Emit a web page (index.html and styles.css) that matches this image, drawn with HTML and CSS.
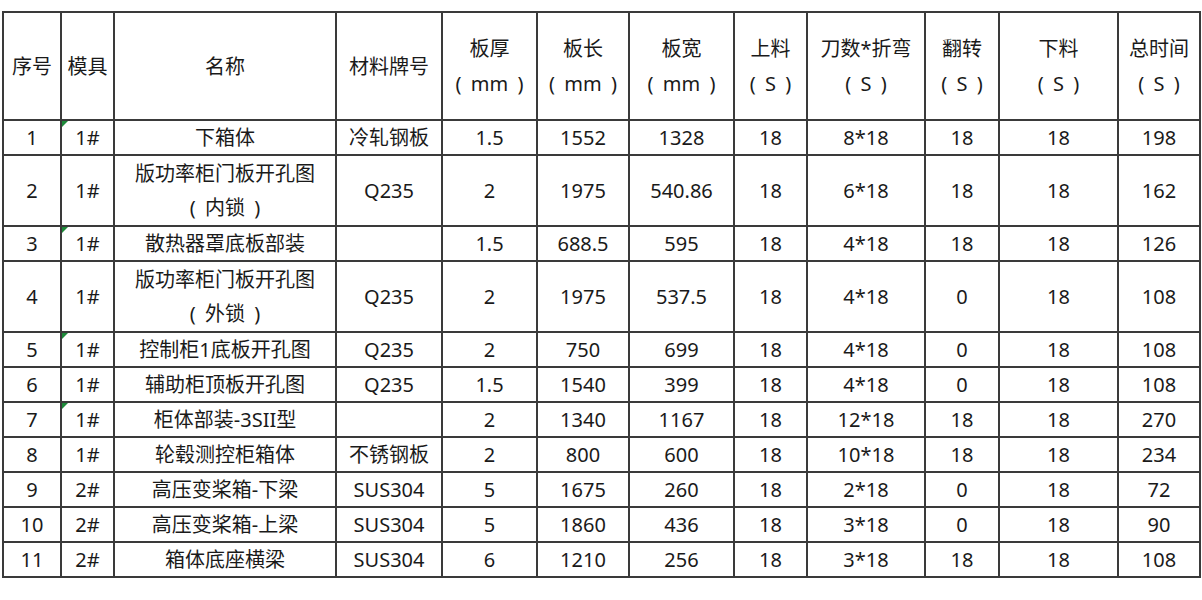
FILE: index.html
```html
<!DOCTYPE html>
<html lang="zh-CN">
<head>
<meta charset="utf-8">
<title>工时表</title>
<link rel="stylesheet" href="styles.css">
</head>
<body>
<table class="sheet">
  <colgroup>
    <col class="c1"><col class="c2"><col class="c3"><col class="c4"><col class="c5"><col class="c6">
    <col class="c7"><col class="c8"><col class="c9"><col class="c10"><col class="c11"><col class="c12">
  </colgroup>
  <thead>
    <tr class="head">
      <th>序号</th><th>模具</th><th>名称</th><th>材料牌号</th>
      <th>板厚<br><span class="unit">( mm )</span></th><th>板长<br><span class="unit">( mm )</span></th><th>板宽<br><span class="unit">( mm )</span></th>
      <th>上料<br><span class="unit">( S )</span></th><th>刀数*折弯<br><span class="unit">( S )</span></th><th>翻转<br><span class="unit">( S )</span></th><th>下料<br><span class="unit">( S )</span></th><th>总时间<br><span class="unit">( S )</span></th>
    </tr>
  </thead>
  <tbody>
    <tr><td>1</td><td class="flag">1#</td><td>下箱体</td><td>冷轧钢板</td><td>1.5</td><td>1552</td><td>1328</td><td>18</td><td>8*18</td><td>18</td><td>18</td><td>198</td></tr>
    <tr class="tall"><td>2</td><td>1#</td><td>版功率柜门板开孔图<br><span class="unit">( 内锁 )</span></td><td>Q235</td><td>2</td><td>1975</td><td>540.86</td><td>18</td><td>6*18</td><td>18</td><td>18</td><td>162</td></tr>
    <tr><td>3</td><td class="flag">1#</td><td>散热器罩底板部装</td><td></td><td>1.5</td><td>688.5</td><td>595</td><td>18</td><td>4*18</td><td>18</td><td>18</td><td>126</td></tr>
    <tr class="tall"><td>4</td><td>1#</td><td>版功率柜门板开孔图<br><span class="unit">( 外锁 )</span></td><td>Q235</td><td>2</td><td>1975</td><td>537.5</td><td>18</td><td>4*18</td><td>0</td><td>18</td><td>108</td></tr>
    <tr><td>5</td><td class="flag">1#</td><td>控制柜1底板开孔图</td><td>Q235</td><td>2</td><td>750</td><td>699</td><td>18</td><td>4*18</td><td>0</td><td>18</td><td>108</td></tr>
    <tr><td>6</td><td>1#</td><td>辅助柜顶板开孔图</td><td>Q235</td><td>1.5</td><td>1540</td><td>399</td><td>18</td><td>4*18</td><td>0</td><td>18</td><td>108</td></tr>
    <tr><td>7</td><td class="flag">1#</td><td>柜体部装-3SII型</td><td></td><td>2</td><td>1340</td><td>1167</td><td>18</td><td>12*18</td><td>18</td><td>18</td><td>270</td></tr>
    <tr><td>8</td><td>1#</td><td>轮毂测控柜箱体</td><td>不锈钢板</td><td>2</td><td>800</td><td>600</td><td>18</td><td>10*18</td><td>18</td><td>18</td><td>234</td></tr>
    <tr><td>9</td><td>2#</td><td>高压变桨箱-下梁</td><td>SUS304</td><td>5</td><td>1675</td><td>260</td><td>18</td><td>2*18</td><td>0</td><td>18</td><td>72</td></tr>
    <tr><td>10</td><td>2#</td><td>高压变桨箱-上梁</td><td>SUS304</td><td>5</td><td>1860</td><td>436</td><td>18</td><td>3*18</td><td>0</td><td>18</td><td>90</td></tr>
    <tr><td>11</td><td>2#</td><td>箱体底座横梁</td><td>SUS304</td><td>6</td><td>1210</td><td>256</td><td>18</td><td>3*18</td><td>18</td><td>18</td><td>108</td></tr>
  </tbody>
</table>
</body>
</html>
```
FILE: styles.css
```css
html, body {
  margin: 0;
  padding: 0;
  background: #ffffff;
}

body {
  font-family: "Noto Sans", "Noto Sans CJK SC", sans-serif;
  color: #1a1a1a;
}

.sheet {
  margin: 11px 0 0 2px;
  border-collapse: collapse;
  table-layout: fixed;
  width: 1197px;
  font-size: 20px;
}

.c1 { width: 58px; }
.c2 { width: 53px; }
.c3 { width: 222px; }
.c4 { width: 106px; }
.c5 { width: 95px; }
.c6 { width: 92px; }
.c7 { width: 105px; }
.c8 { width: 73px; }
.c9 { width: 118px; }
.c10 { width: 74px; }
.c11 { width: 119px; }
.c12 { width: 82px; }

.sheet th,
.sheet td {
  border: 2px solid #3a3a3a;
  padding: 0;
  text-align: center;
  vertical-align: middle;
  font-weight: normal;
  line-height: 31px;
  white-space: nowrap;
  overflow: hidden;
}

.head th {
  height: 106px;
  line-height: 35px;
}

.sheet tbody tr {
  height: 35px;
}

.sheet tbody tr.tall {
  height: 71px;
}

.sheet tbody tr.tall td {
  line-height: 34px;
}

.unit {
  word-spacing: 4px;
}

.flag {
  position: relative;
}

.flag::before {
  content: "";
  position: absolute;
  left: 0;
  top: 0;
  width: 0;
  height: 0;
  border-top: 6px solid #1e8a3a;
  border-right: 6px solid transparent;
}
```
